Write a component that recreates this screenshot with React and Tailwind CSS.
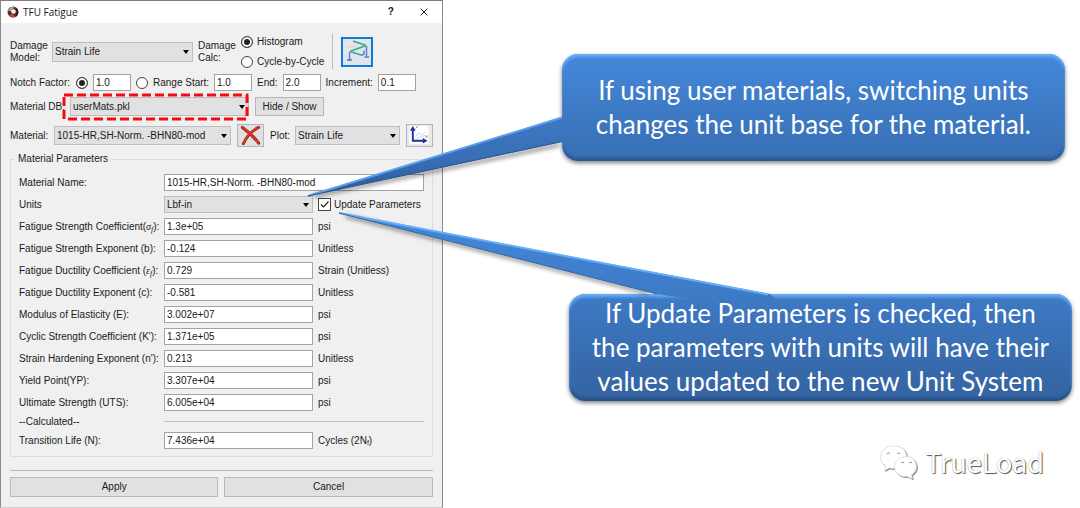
import React from "react";
import { X } from "lucide-react";

const parameters = [
  { id: "sigma", label: <>Fatigue Strength Coefficient(<Symbol base="σ" sub="f" />):</>, value: "1.3e+05", unit: "psi" },
  { id: "b", label: "Fatigue Strength Exponent (b):", value: "-0.124", unit: "Unitless" },
  { id: "epsilon", label: <>Fatigue Ductility Coefficient (<Symbol base="ε" sub="f" />):</>, value: "0.729", unit: "Strain (Unitless)" },
  { id: "c", label: "Fatigue Ductility Exponent (c):", value: "-0.581", unit: "Unitless" },
  { id: "modulus", label: "Modulus of Elasticity (E):", value: "3.002e+07", unit: "psi" },
  { id: "k", label: "Cyclic Strength Coefficient (K'):", value: "1.371e+05", unit: "psi" },
  { id: "n", label: "Strain Hardening Exponent (n'):", value: "0.213", unit: "Unitless" },
  { id: "yp", label: "Yield Point(YP):", value: "3.307e+04", unit: "psi" },
  { id: "uts", label: "Ultimate Strength (UTS):", value: "6.005e+04", unit: "psi" },
];

function Symbol({ base, sub }) {
  return (
    <i className="font-['Liberation_Serif',serif]">
      {base}
      <sub className="text-[8px]">{sub}</sub>
    </i>
  );
}

const TextField = ({ className = "", ...props }) => (
  <input
    type="text"
    className={`h-[17px] min-w-0 border border-[#a3a3a3] bg-white px-[2px] ${className}`}
    {...props}
  />
);

const Select = ({ options, className = "", children, ...props }) => (
  <div className={`relative ${className}`}>
    <select
      className="h-full w-full appearance-none border border-[#bdbdbd] bg-[#e1e1e1] px-[2px]"
      {...props}
    >
      {options.map((option) => (
        <option key={option}>{option}</option>
      ))}
    </select>
    <svg
      viewBox="0 0 6 4"
      className="pointer-events-none absolute top-1/2 right-1 h-1 w-1.5 -translate-y-1/2"
    >
      <path d="M0 0h6L3 4z" fill="#000" />
    </svg>
    {children}
  </div>
);

const Radio = (props) => (
  <input
    type="radio"
    className="size-3 shrink-0 appearance-none rounded-full border border-[#444] bg-white checked:bg-[#222] checked:shadow-[inset_0_0_0_2px_white]"
    {...props}
  />
);

const AppIcon = () => (
  <svg viewBox="0 0 12 12" className="size-3">
    <circle cx="6" cy="6" r="5.5" fill="#5b2a28" />
    <path d="M1 5a5 5 0 0 1 6-4L5 5z" fill="#a9a3a3" />
    <path d="M2 9c1 2 4 3 6 2L6 8z" fill="#c4512c" />
    <circle cx="6.5" cy="5.5" r="2.3" fill="#f5eeee" />
    <path d="M9 3c2 2 2 5 0 7" stroke="#241a1a" strokeWidth="1.4" fill="none" />
  </svg>
);

const FrameIcon = () => (
  <svg viewBox="0 0 28 26" className="h-[26px] w-7" fill="none">
    <path d="M3 1h17v16H3z" fill="#e6e6e6" />
    <path d="M11 1v16M3 8h17" stroke="#d4d6d8" />
    <path d="M10 2L23 6.500" stroke="#3aa58c" strokeWidth="1.800" />
    <path d="M23 6.500L7 12.500" stroke="#35b57a" strokeWidth="1.800" />
    <path d="M7 12.500L18 16" stroke="#3f9fb0" strokeWidth="1.500" />
    <path d="M6.500 13v8M23.500 7v10M21 11.500v3.500L18 16.500" stroke="#5b82cc" strokeWidth="1.500" />
    <path d="M4 21h5M21.500 18h4.500" stroke="#5678b8" strokeWidth="1.500" />
  </svg>
);

const DeleteIcon = () => (
  <svg viewBox="0 0 24 22" className="h-[21px] w-6" fill="none" strokeLinecap="round">
    <path d="M3 2.500C8 6 15 12 20 19" stroke="#8e1d12" strokeWidth="3.200" />
    <path d="M20 2.500C13 6 7 13 4 19.500" stroke="#8e1d12" strokeWidth="3" />
    <path d="M3 2.300C8 6 15 12 19.500 18.500" stroke="#dc3a28" strokeWidth="2" />
    <path d="M19.500 2.700C13 6 7 13 4 19" stroke="#dc3a28" strokeWidth="1.800" />
  </svg>
);

const PlotIcon = () => (
  <svg viewBox="0 0 24 22" className="h-[21px] w-6" fill="none">
    <path d="M2 1h20v19H2z" fill="#fff" />
    <path d="M5.500 5v11.500H17" stroke="#1b33a8" strokeWidth="2" />
    <path d="M5.500 1L2.500 6h6zM21 16.500l-5-3v6z" fill="#1b33a8" />
    <path d="M9 12l3-4 3 3 4-4" stroke="#b5e0ee" />
    <path d="M8 14c4-1 6-1 10-3" stroke="#c9d8de" />
    <path d="M8.500 3.500l2-2M19 13l2-2M19 11l2 2" stroke="#d64550" />
  </svg>
);

const FatigueDialog = () => (
  <form
    className="flex min-h-screen w-[41%] min-w-[440px] flex-col border border-t-[#7d7d7d] border-r-[#8a8a8a] border-b-[#d0d0d0] border-l-[#8a8a8a] bg-[#f0f0f0] font-['Liberation_Sans',Arial,sans-serif] text-[10px] leading-3 text-[#1a1a1a]"
    onSubmit={(e) => e.preventDefault()}
  >
    <header className="flex h-[22px] items-center bg-white pr-3 pl-1.5">
      <AppIcon />
      <h1 className="ml-1 flex-1 font-['Open_Sans',sans-serif]">TFU Fatigue</h1>
      <button type="button" aria-label="Help" className="mr-6 font-bold">
        ?
      </button>
      <button type="button" aria-label="Close">
        <X className="size-3" strokeWidth={2} />
      </button>
    </header>

    <div className="flex flex-col px-[9px] pt-[11px] pb-2">
      <div className="flex h-[35px] items-center">
        <label htmlFor="damage-model" className="w-[42px]">
          Damage Model:
        </label>
        <Select id="damage-model" className="h-5 w-[141px]" options={["Strain Life", "Stress Life"]} />
        <div role="radiogroup" aria-labelledby="damage-calc" className="ml-[5px] flex items-center">
          <span id="damage-calc" className="w-[43px]">
            Damage Calc:
          </span>
          <div className="flex flex-col gap-2">
            <label className="flex items-center gap-1">
              <Radio name="calc" defaultChecked />
              Histogram
            </label>
            <label className="flex items-center gap-1">
              <Radio name="calc" />
              Cycle-by-Cycle
            </label>
          </div>
        </div>
        <div className="mx-2 h-full border-l border-[#bcbcbc]" />
        <button
          type="button"
          aria-label="Show model"
          className="flex h-[30px] w-8 items-center justify-center border-2 border-[#0f7bd8] bg-[#dfe5ea]"
        >
          <FrameIcon />
        </button>
      </div>

      <div className="mt-[5px] flex items-center gap-[5px] whitespace-nowrap">
        <span className="w-[61px]">Notch Factor:</span>
        <Radio name="notch" aria-label="Single notch factor" defaultChecked />
        <TextField aria-label="Notch Factor" className="w-[38px]" defaultValue="1.0" />
        <Radio name="notch" id="notch-range" />
        <label htmlFor="notch-range" className="w-14">
          Range Start:
        </label>
        <TextField aria-label="Range Start" className="w-[38px]" defaultValue="1.0" />
        <label htmlFor="range-end">End:</label>
        <TextField id="range-end" className="w-[38px]" defaultValue="2.0" />
        <label htmlFor="increment">Increment:</label>
        <TextField id="increment" className="w-[38px]" defaultValue="0.1" />
      </div>

      <div className="mt-1.5 flex h-[19px] items-center">
        <label htmlFor="material-db" className="w-[60px] whitespace-nowrap">
          Material DB:
        </label>
        <Select id="material-db" className="h-full w-[179px]" options={["userMats.pkl"]}>
          <svg className="pointer-events-none absolute -top-1 -left-2 h-7 w-[187px]" fill="none">
            <rect
              x="2"
              y="2"
              width="183"
              height="24"
              stroke="#f50a0f"
              strokeWidth="3"
              strokeDasharray="9 4"
            />
          </svg>
        </Select>
        <button type="button" className="ml-1.5 h-full w-[69px] border border-[#b5b5b5] bg-[#e1e1e1]">
          Hide / Show
        </button>
      </div>

      <div className="mt-2 flex h-[23px] items-center">
        <label htmlFor="material" className="w-11">
          Material:
        </label>
        <Select id="material" className="h-[19px] w-[177px]" options={["1015-HR,SH-Norm. -BHN80-mod"]} />
        <button
          type="button"
          aria-label="Delete material"
          className="ml-1.5 flex h-full w-[27px] items-center justify-center border border-[#b5b5b5] bg-[#e1e1e1]"
        >
          <DeleteIcon />
        </button>
        <label htmlFor="plot" className="ml-1.5 w-[25px]">
          Plot:
        </label>
        <Select id="plot" className="h-[19px] flex-1" options={["Strain Life", "Stress Life"]} />
        <button
          type="button"
          aria-label="Plot"
          className="ml-1.5 flex h-full w-[27px] items-center justify-center border border-[#b5b5b5] bg-[#e9e9e9]"
        >
          <PlotIcon />
        </button>
      </div>

      <fieldset className="mt-1.5 border border-[#dcdcdc] px-2 pb-[7px]">
        <legend className="-ml-1 px-[3px]">Material Parameters</legend>
        <div className="mt-[9px] grid grid-cols-[145px_149px_1fr] items-center gap-y-[5px]">
          <label htmlFor="name">Material Name:</label>
          <TextField id="name" className="col-span-2" defaultValue="1015-HR,SH-Norm. -BHN80-mod" />

          <label htmlFor="units">Units</label>
          <Select id="units" className="h-[17px]" options={["Lbf-in", "N-mm", "N-m"]} />
          <label className="ml-[5px] flex items-center gap-[3px] whitespace-nowrap">
            <span className="relative flex">
              <input
                type="checkbox"
                defaultChecked
                className="peer size-[13px] appearance-none border border-[#444] bg-white"
              />
              <svg
                viewBox="0 0 13 13"
                className="pointer-events-none absolute inset-0 hidden size-[13px] peer-checked:block"
                fill="none"
              >
                <path d="M3 6.500L5.500 9L10.500 3.500" stroke="#222" strokeWidth="1.200" />
              </svg>
            </span>
            Update Parameters
          </label>

          {parameters.map((p) => (
            <React.Fragment key={p.id}>
              <label htmlFor={p.id} className="h-3 whitespace-nowrap">
                {p.label}
              </label>
              <TextField id={p.id} defaultValue={p.value} />
              <span className="ml-[5px]">{p.unit}</span>
            </React.Fragment>
          ))}

          <span className="h-[11px]">--Calculated--</span>
          <hr className="col-span-2 border-[#c0c0c0]" />

          <label htmlFor="transition">Transition Life (N):</label>
          <TextField id="transition" defaultValue="7.436e+04" readOnly />
          <span className="ml-[5px] h-3">
            Cycles (2N<sub className="text-[7px]">f</sub>)
          </span>
        </div>
      </fieldset>

      <hr className="mt-[13px] border-[#b9b9b9]" />

      <div className="mt-1.5 grid grid-cols-2 gap-1.5">
        <button type="submit" className="h-5 border border-[#b9b9b9] bg-[#e1e1e1]">
          Apply
        </button>
        <button type="button" className="h-5 border border-[#b9b9b9] bg-[#e1e1e1]">
          Cancel
        </button>
      </div>
    </div>
  </form>
);

const calloutBox =
  "relative flex min-h-[107px] items-center justify-center rounded-2xl pb-[2px] text-center font-['Lato',sans-serif] text-[26px] leading-[34px] whitespace-nowrap text-white shadow-[0_2px_4px_rgba(0,0,0,0.5),inset_0_3px_3px_#66aefa,inset_0_-3px_3px_rgba(20,50,100,0.4)]";

const UnitsCallout = () => (
  <aside className={`${calloutBox} mr-[15px] bg-linear-to-b from-[#4488da] to-[#386eb3]`}>
    <svg
      viewBox="0 0 270 160"
      className="pointer-events-none absolute top-0 -left-[262px] h-40 w-[270px]"
    >
      <defs>
        <linearGradient id="units-tail" gradientUnits="userSpaceOnUse" x1="0" y1="0" x2="0" y2="142">
          <stop offset="0" stopColor="#4488da" />
          <stop offset="0.75" stopColor="#386eb3" />
          <stop offset="1" stopColor="#2b5a96" />
        </linearGradient>
      </defs>
      <path
        d="M14 142L259 91"
        stroke="#000"
        strokeOpacity="0.5"
        strokeWidth="3"
        className="blur-[2px]"
      />
      <path d="M8 142L262 63L266 62V87L262 88z" fill="url(#units-tail)" />
      <path d="M8 142L262 63.500" stroke="#5c9fee" strokeWidth="2" />
      <path d="M8 142L262 87.500" stroke="#2c5790" />
    </svg>
    <p className="relative">
      If using user materials, switching units
      <br />
      changes the unit base for the material.
    </p>
  </aside>
);

const UpdateCallout = () => (
  <aside className={`${calloutBox} mr-2 ml-[7px] bg-linear-to-b from-[#3e7ac6] to-[#3463a0]`}>
    <svg
      viewBox="0 0 460 110"
      className="pointer-events-none absolute -top-[90px] -left-[239px] h-[110px] w-[460px]"
    >
      <defs>
        <linearGradient id="update-tail" gradientUnits="userSpaceOnUse" x1="0" y1="9" x2="0" y2="100">
          <stop offset="0" stopColor="#4488da" />
          <stop offset="1" stopColor="#3d79c4" />
        </linearGradient>
      </defs>
      <path
        d="M16 12L318 89"
        stroke="#000"
        strokeOpacity="0.5"
        strokeWidth="3"
        className="blur-[2px]"
      />
      <path d="M9 9L440 90L446 95H360L327 90z" fill="url(#update-tail)" />
      <path d="M9 9L438 90.500" stroke="#66aefa" strokeWidth="2" />
      <path d="M9 9L327 90" stroke="#34659f" />
    </svg>
    <p className="relative">
      If Update Parameters is checked, then
      <br />
      the parameters with units will have their
      <br />
      values updated to the new Unit System
    </p>
  </aside>
);

const Watermark = () => (
  <div className="mt-auto mr-9 mb-7 flex items-center justify-end gap-1.5">
    <svg
      viewBox="0 0 40 36"
      className="h-9 w-10 drop-shadow-[1px_1px_0_#888]"
      stroke="#cfcfcf"
      strokeWidth="0.600"
    >
      <path
        d="M14 2C7 2 1.500 7 1.500 13c0 4 2 7 5 9l-1 4.500 5-2.500c7 2 17-2 17-11S21 2 14 2z"
        fill="#fff"
      />
      <path
        d="M27.500 12.500c-6.500 0-12 4.500-12 10.500s6 10.500 13 9.500l5 2.500-1-4c3-2 5-4.500 5-8 0-6-4-10.500-10-10.500z"
        fill="#fff"
      />
      <path
        d="M8 10q1.500-2.500 3 0M18 10q1.500-2.500 3 0M22 19q1.500-2 3 0M30 19q1.500-2 3 0"
        fill="none"
        stroke="#888"
        strokeWidth="1"
      />
    </svg>
    <span className="font-['Noto_Sans_CJK_SC',sans-serif] text-[27px] leading-9 text-white [text-shadow:1px_1px_1px_#555,0_0_1px_#999]">
      TrueLoad
    </span>
  </div>
);

const App = () => (
  <main className="flex min-h-screen bg-white">
    <FatigueDialog />
    <section className="flex flex-1 flex-col pt-[54px] pl-[119px]">
      <UnitsCallout />
      <div className="h-[133px]" />
      <UpdateCallout />
      <Watermark />
    </section>
  </main>
);

export default App;
